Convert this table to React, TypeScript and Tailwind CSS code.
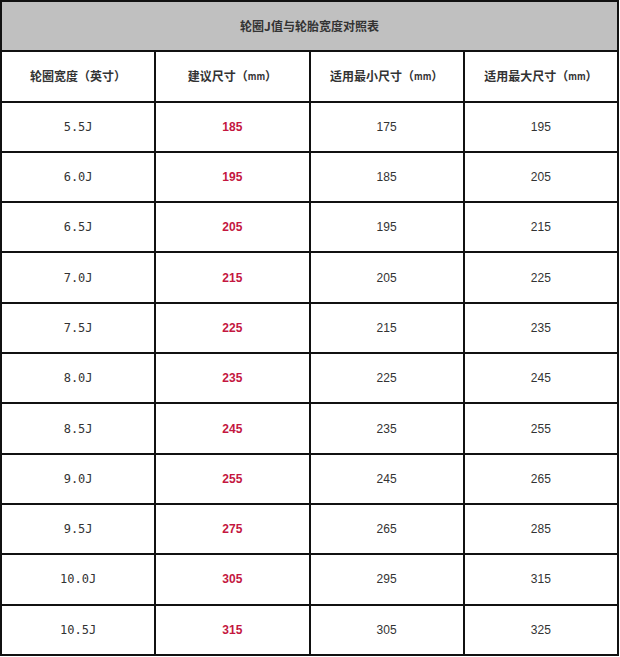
import React from "react";

const rows: [string, string, string, string][] = [
  ["5.5J", "185", "175", "195"],
  ["6.0J", "195", "185", "205"],
  ["6.5J", "205", "195", "215"],
  ["7.0J", "215", "205", "225"],
  ["7.5J", "225", "215", "235"],
  ["8.0J", "235", "225", "245"],
  ["8.5J", "245", "235", "255"],
  ["9.0J", "255", "245", "265"],
  ["9.5J", "275", "265", "285"],
  ["10.0J", "305", "295", "315"],
  ["10.5J", "315", "305", "325"],
];

function Mm() {
  return (
    <>
      （<span className="text-[9px]">mm</span>）
    </>
  );
}

const headers = [
  <>轮圈宽度（英寸）</>,
  <>建议尺寸<Mm /></>,
  <>适用最小尺寸<Mm /></>,
  <>适用最大尺寸<Mm /></>,
];

export default function App() {
  return (
    <div className="w-[620px] h-[657px] bg-white">
      <div className="w-[619px] grid grid-cols-4 auto-rows-[48.3px] gap-[2px] p-[2px] bg-[#111]">
        <div className="col-span-4 bg-[#c0c0c0] flex items-center justify-center text-[12px] font-bold text-[#333] font-['Noto_Sans_CJK_SC',sans-serif]">
          轮圈J值与轮胎宽度对照表
        </div>
        {headers.map((h, i) => (
          <div
            key={i}
            className="bg-white flex items-center justify-center text-[12px] font-bold text-[#333] font-['Noto_Sans_CJK_SC',sans-serif]"
          >
            {h}
          </div>
        ))}
        {rows.map((r) => (
          <React.Fragment key={r[0]}>
            <div className="bg-white flex items-center justify-center text-[12px] text-[#333] font-['DejaVu_Sans_Mono',monospace]">
              {r[0]}
            </div>
            <div className="bg-white flex items-center justify-center text-[12px] font-bold text-[#c4173f] font-['Liberation_Sans',Arial,sans-serif]">
              {r[1]}
            </div>
            <div className="bg-white flex items-center justify-center text-[12px] text-[#333] font-['Liberation_Sans',Arial,sans-serif]">
              {r[2]}
            </div>
            <div className="bg-white flex items-center justify-center text-[12px] text-[#333] font-['Liberation_Sans',Arial,sans-serif]">
              {r[3]}
            </div>
          </React.Fragment>
        ))}
      </div>
    </div>
  );
}
